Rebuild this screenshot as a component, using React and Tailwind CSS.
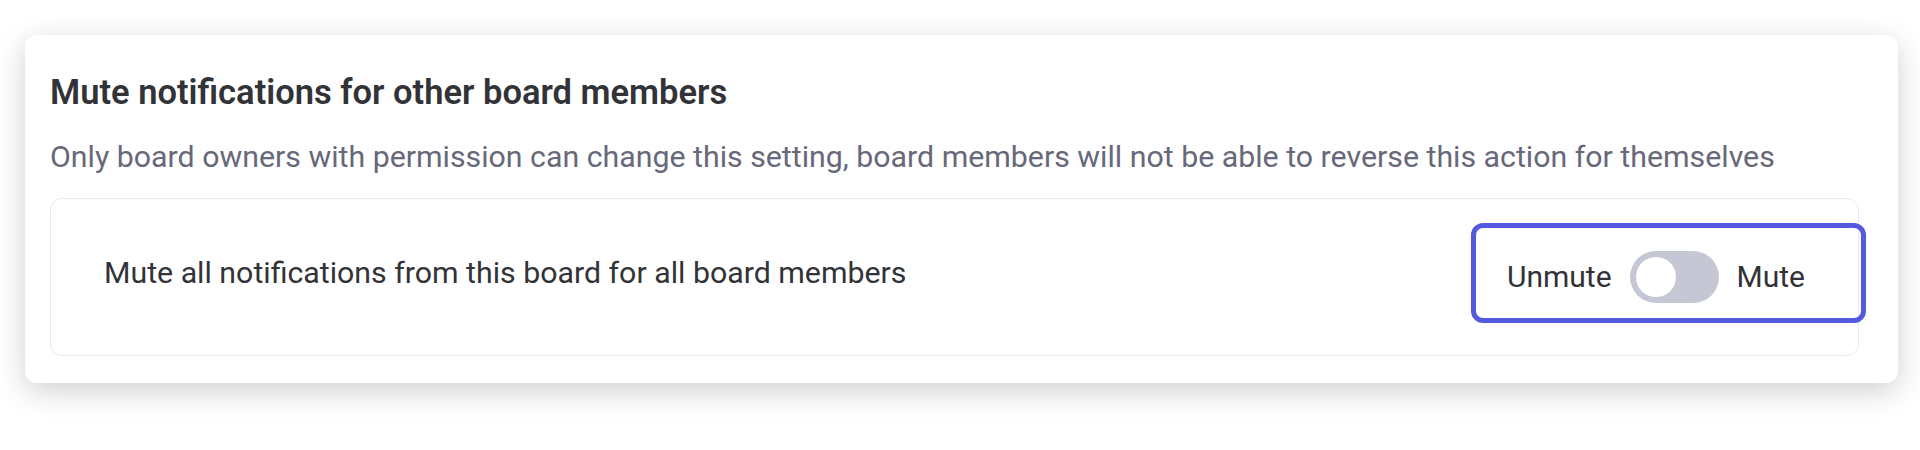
import { useState } from "react";

export default function App() {
  const [muted, setMuted] = useState(false);

  return (
    <div
      className="min-h-[450px] w-full bg-white pt-[35px] pl-[25px] pr-[22px]"
      style={{ fontFamily: "Roboto, 'Liberation Sans', sans-serif" }}
    >
      <div className="rounded-[12px] bg-white pt-[37px] pb-[27px] pl-[25px] pr-[39px] shadow-[0_8px_30px_rgba(0,0,0,0.19)]">
        <h2 className="text-[34.5px] leading-[40px] font-semibold text-[#323338]">
          Mute notifications for other board members
        </h2>
        <p className="mt-[27px] text-[30.3px] leading-[36px] text-[#676879]">
          Only board owners with permission can change this setting, board members will not be able to reverse this action for themselves
        </p>

        <div className="mt-[23px] flex items-center justify-between rounded-[12px] border border-[#e9e9f2] pt-[24px] pb-[32px] pl-[53px]">
          <span className="text-[30.3px] leading-[36px] text-[#323338]">
            Mute all notifications from this board for all board members
          </span>

          <div className="-mr-[8px] flex items-center gap-[18px] rounded-[12px] border-[5px] border-[#5559df] pt-[23px] pb-[15px] pl-[31px] pr-[56px]">
            <span className="text-[30px] leading-[36px] text-[#323338]">Unmute</span>
            <button
              type="button"
              onClick={() => setMuted(!muted)}
              className={
                "relative flex h-[52px] w-[89px] items-center rounded-full px-[6px] " +
                (muted ? "justify-end bg-[#0073ea]" : "justify-start bg-[#c5c7d4]")
              }
            >
              <span className="block h-[40px] w-[40px] rounded-full bg-white" />
            </button>
            <span className="text-[30px] leading-[36px] text-[#323338]">Mute</span>
          </div>
        </div>
      </div>
    </div>
  );
}
